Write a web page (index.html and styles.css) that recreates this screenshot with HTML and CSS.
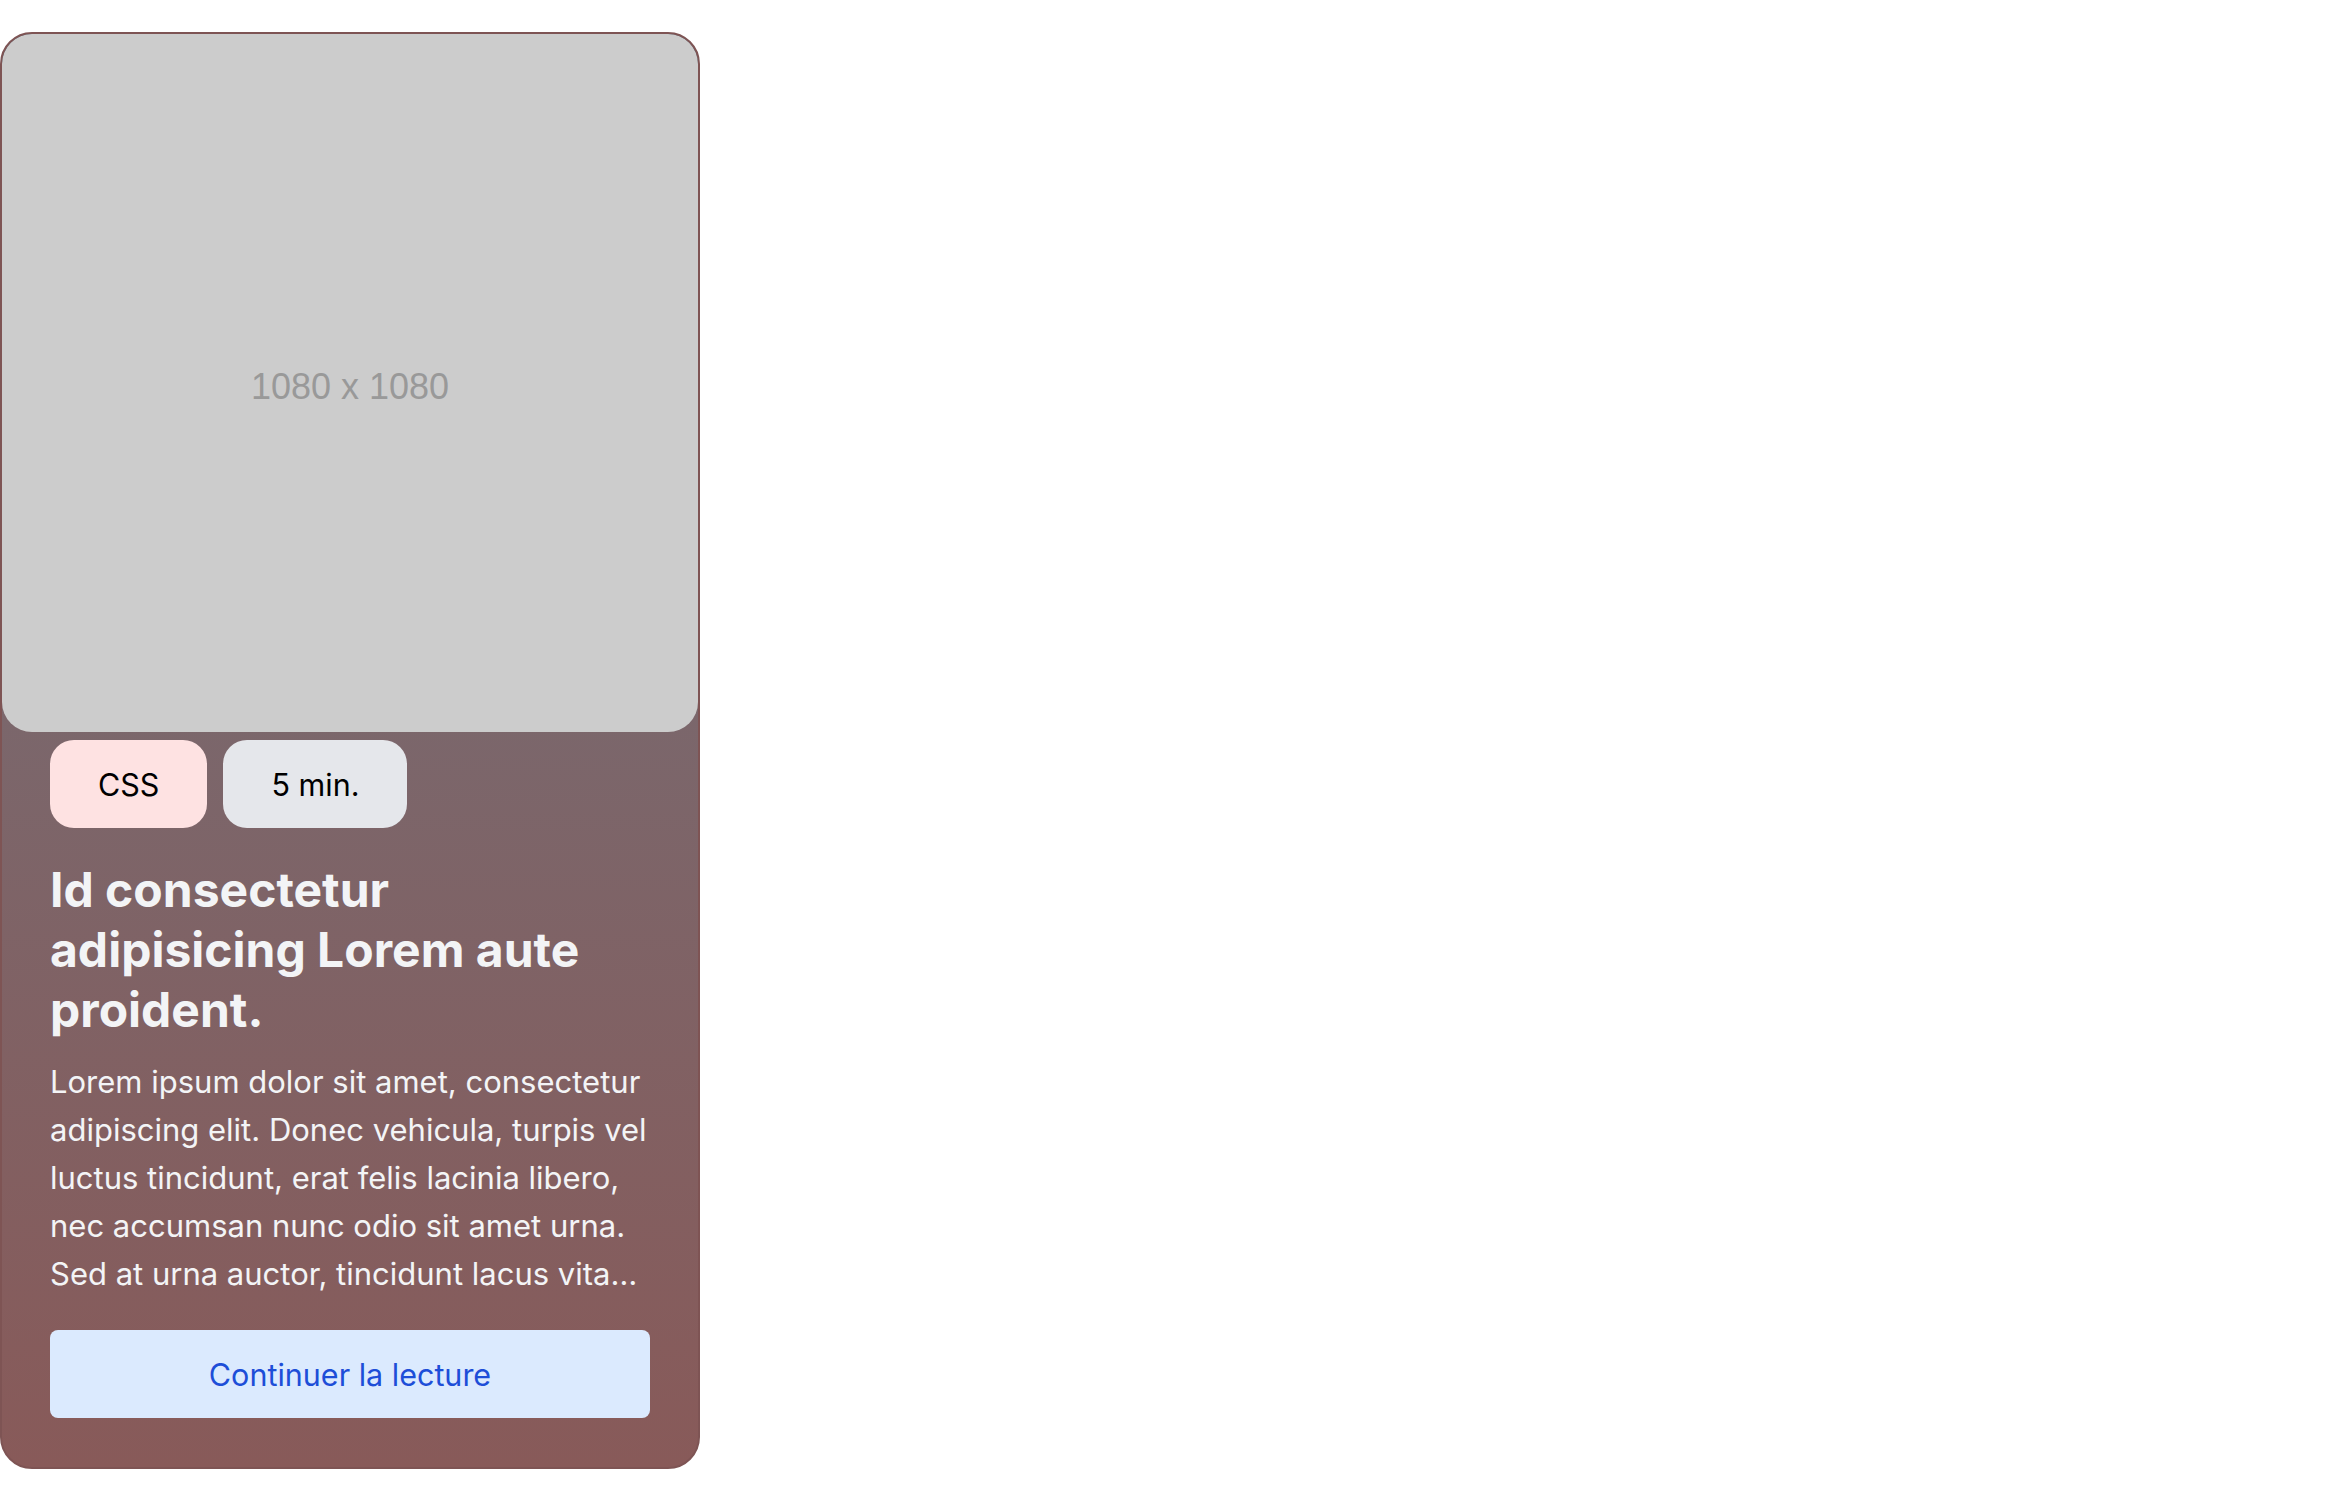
FILE: index.html
```html
<!DOCTYPE html>
<html lang="fr">
<head>
<meta charset="utf-8">
<title>Carte article</title>
<link rel="stylesheet" href="styles.css">
</head>
<body>
<main class="page">
  <article class="card">
    <div class="card-image"><span class="card-image-label">1080 x 1080</span></div>
    <div class="card-body">
      <div class="tags">
        <span class="tag tag-red">CSS</span>
        <span class="tag tag-gray">5 min.</span>
      </div>
      <h2 class="card-title">Id consectetur adipisicing Lorem aute proident.</h2>
      <p class="card-text">Lorem ipsum dolor sit amet, consectetur adipiscing elit. Donec vehicula, turpis vel luctus tincidunt, erat felis lacinia libero, nec accumsan nunc odio sit amet urna. Sed at urna auctor, tincidunt lacus vitae, fermentum nisl. Integer ut sapien non magna pretium tempus.</p>
      <a class="card-button" href="#">Continuer la lecture</a>
    </div>
  </article>
</main>
</body>
</html>
```
FILE: styles.css
```css
html, body {
  margin: 0;
  padding: 0;
  background: #ffffff;
}

.page {
  padding-top: 32px;
  font-family: Inter, "Noto Sans", sans-serif;
}

.card {
  box-sizing: border-box;
  width: 700px;
  border: 2px solid #7e5454;
  border-radius: 32px;
  background: linear-gradient(to bottom, #6f727c 0%, #885a59 100%);
  overflow: hidden;
  display: flex;
  flex-direction: column;
}

.card-image {
  box-sizing: border-box;
  aspect-ratio: 348 / 349;
  width: 100%;
  padding-top: 8px;
  background: #cccccc;
  border-radius: 30px;
  display: flex;
  align-items: center;
  justify-content: center;
}

.card-image-label {
  font-family: "Liberation Sans", Arial, sans-serif;
  font-size: 36px;
  color: #999999;
}

.card-body {
  padding: 8px 48px 49px;
  display: flex;
  flex-direction: column;
}

.tags {
  display: flex;
  gap: 16px;
}

.tag {
  height: 88px;
  padding: 0 48px;
  border-radius: 24px;
  display: flex;
  align-items: center;
  font-size: 30.5px;
  color: #000000;
}

.tag-red {
  background: #fee2e2;
}

.tag-gray {
  background: #e5e7eb;
}

.card-title {
  margin: 32px 0 0;
  font-size: 48px;
  line-height: 60px;
  font-weight: 700;
  color: #f3f4f6;
}

.card-text {
  margin: 18px 0 0;
  font-size: 31px;
  line-height: 48px;
  color: #f3f4f6;
  display: -webkit-box;
  -webkit-line-clamp: 5;
  -webkit-box-orient: vertical;
  overflow: hidden;
}

.card-button {
  margin-top: 32px;
  height: 88px;
  border-radius: 8px;
  background: #dbeafe;
  color: #1d4ed8;
  font-size: 30.5px;
  text-decoration: none;
  display: flex;
  align-items: center;
  justify-content: center;
}
```
